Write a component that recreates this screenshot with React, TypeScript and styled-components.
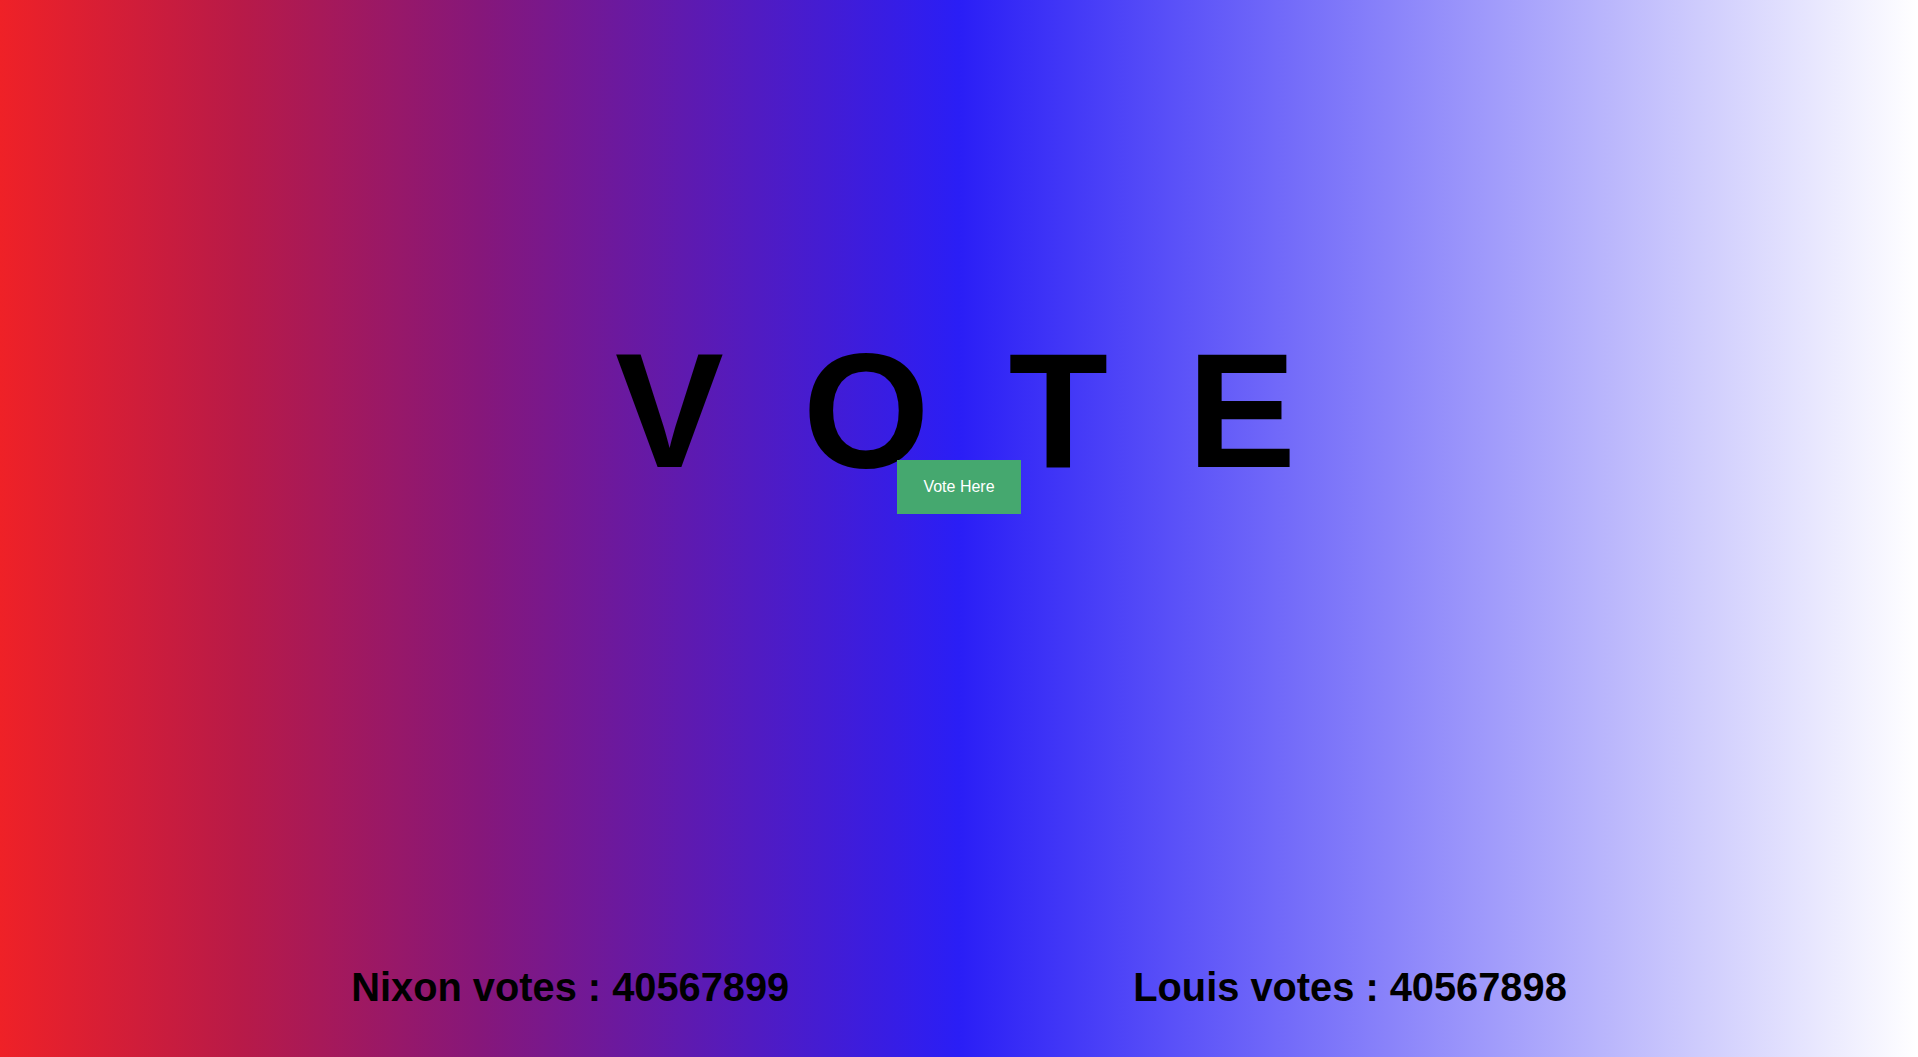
import React from "react";
import styled, { createGlobalStyle } from "styled-components";

const GlobalStyle = createGlobalStyle`
  html, body {
    margin: 0;
    padding: 0;
  }
  body {
    font-family: "Liberation Sans", Arial, sans-serif;
  }
`;

const Page = styled.div`
  min-height: 100vh;
  display: flex;
  flex-direction: column;
  background: linear-gradient(
    to right,
    #ef2127 0%,
    #b81a48 12.5%,
    #86177a 25%,
    #2a1ef6 50%,
    #ffffff 100%
  );
  overflow: hidden;
`;

const Hero = styled.section`
  display: flex;
  flex-direction: column;
  align-items: center;
  padding-top: 362px;
`;

const Title = styled.h1`
  align-self: stretch;
  margin: 0;
  padding-left: 72px;
  text-align: center;
  font-family: "Liberation Sans", Arial, sans-serif;
  font-weight: 700;
  font-size: 163px;
  line-height: 98px;
  letter-spacing: 79px;
  font-kerning: none;
  color: #000;
`;

const VoteButton = styled.button`
  position: relative;
  z-index: 1;
  width: 124px;
  height: 54px;
  border: none;
  background: #45a86f;
  color: #fff;
  font-family: "Liberation Sans", Arial, sans-serif;
  font-size: 16px;
  cursor: pointer;
`;

const Footer = styled.footer`
  margin-top: auto;
  padding-bottom: 47px;
  display: flex;
  justify-content: center;
  gap: 344px;
`;

const Count = styled.h2`
  margin: 0;
  font-family: "Liberation Sans", Arial, sans-serif;
  font-weight: 700;
  font-size: 39.8px;
  line-height: 46px;
  color: #000;
`;

export default function App() {
  return (
    <>
      <GlobalStyle />
      <Page>
        <Hero>
          <Title>VOTE</Title>
          <VoteButton>Vote Here</VoteButton>
        </Hero>
        <Footer>
          <Count>Nixon votes : 40567899</Count>
          <Count>Louis votes : 40567898</Count>
        </Footer>
      </Page>
    </>
  );
}
